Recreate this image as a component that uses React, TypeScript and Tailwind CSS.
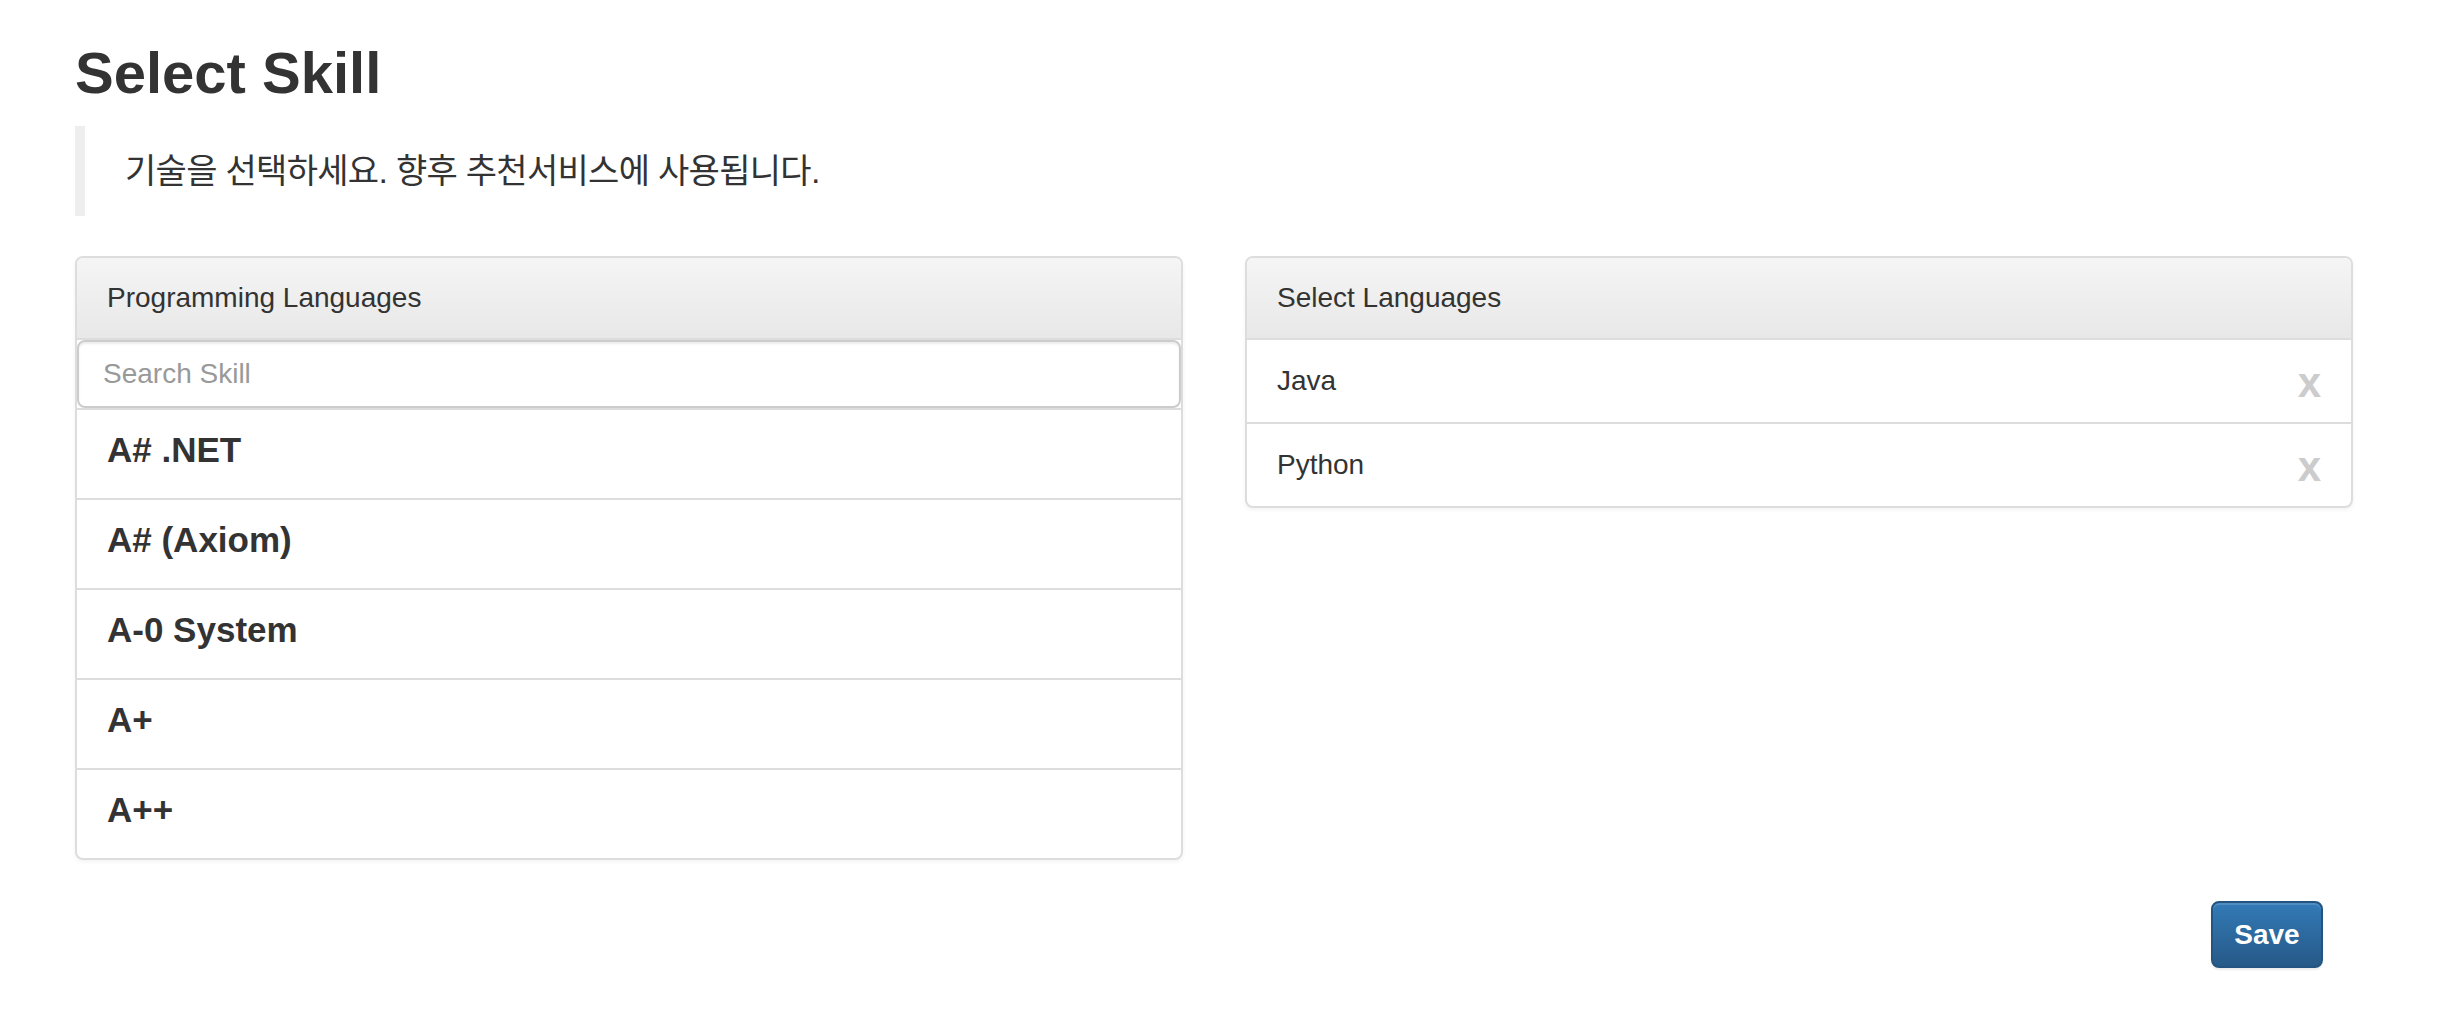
import React, { useState } from "react";

const skills = ["A# .NET", "A# (Axiom)", "A-0 System", "A+", "A++"];

export default function App() {
  const [search, setSearch] = useState("");
  const [selected, setSelected] = useState<string[]>(["Java", "Python"]);

  return (
    <div className="min-h-screen bg-white font-['Liberation_Sans','Noto_Sans_CJK_KR',sans-serif] text-[#333]">
      <div className="ml-[75px] w-[2278px]">
        {/* Title */}
        <h2 className="pt-[40px] text-[58px] leading-[66px] font-bold">Select Skill</h2>

        {/* Description */}
        <blockquote className="mt-[20px] border-l-[10px] border-[#eee] py-[20px] pl-[40px] text-[34px] leading-[50px] tracking-[-0.7px]">
          기술을 선택하세요. 향후 추천서비스에 사용됩니다.
        </blockquote>

        <div className="mt-[40px] flex items-start gap-[62px]">
          {/* Programming languages */}
          <div className="w-[1108px] overflow-hidden rounded-[8px] border-2 border-[#ddd] bg-white shadow-[0_2px_4px_rgba(0,0,0,0.05)]">
            <div className="border-b-2 border-[#ddd] bg-gradient-to-b from-[#f5f5f5] to-[#e8e8e8] px-[30px] py-[20px] text-[28px] leading-[40px]">
              Programming Languages
            </div>
            <input
              type="text"
              value={search}
              onChange={(e) => setSearch(e.target.value)}
              placeholder="Search Skill"
              className="block h-[68px] w-full rounded-[8px] border-2 border-[#ccc] px-[24px] text-[28px] text-[#555] shadow-[inset_0_2px_2px_rgba(0,0,0,0.075)] placeholder:text-[#999] focus:outline-none"
            />
            {skills.map((s) => (
              <div
                key={s}
                className="flex h-[90px] items-center border-t-2 border-[#ddd] px-[30px] pb-[10px] text-[35px] leading-none font-bold"
              >
                {s}
              </div>
            ))}
          </div>

          {/* Selected languages */}
          <div className="w-[1108px] overflow-hidden rounded-[8px] border-2 border-[#ddd] bg-white shadow-[0_2px_4px_rgba(0,0,0,0.05)]">
            <div className="bg-gradient-to-b from-[#f5f5f5] to-[#e8e8e8] px-[30px] py-[20px] text-[28px] leading-[40px]">
              Select Languages
            </div>
            {selected.map((s) => (
              <div
                key={s}
                className="flex h-[84px] items-center justify-between border-t-2 border-[#ddd] px-[30px] text-[28px]"
              >
                <span>{s}</span>
                <button
                  type="button"
                  onClick={() => setSelected(selected.filter((x) => x !== s))}
                  className="mt-[4px] text-[42px] leading-none font-bold text-[#ccc]"
                >
                  x
                </button>
              </div>
            ))}
          </div>
        </div>

        {/* Save */}
        <div className="mt-[41px] flex justify-end pr-[30px]">
          <button
            type="button"
            className="h-[67px] w-[112px] rounded-[8px] border-2 border-[#245580] bg-gradient-to-b from-[#337ab7] to-[#265a88] text-[28px] font-bold text-white shadow-[inset_0_2px_0_rgba(255,255,255,0.15),0_2px_2px_rgba(0,0,0,0.075)]"
          >
            Save
          </button>
        </div>
      </div>
    </div>
  );
}
